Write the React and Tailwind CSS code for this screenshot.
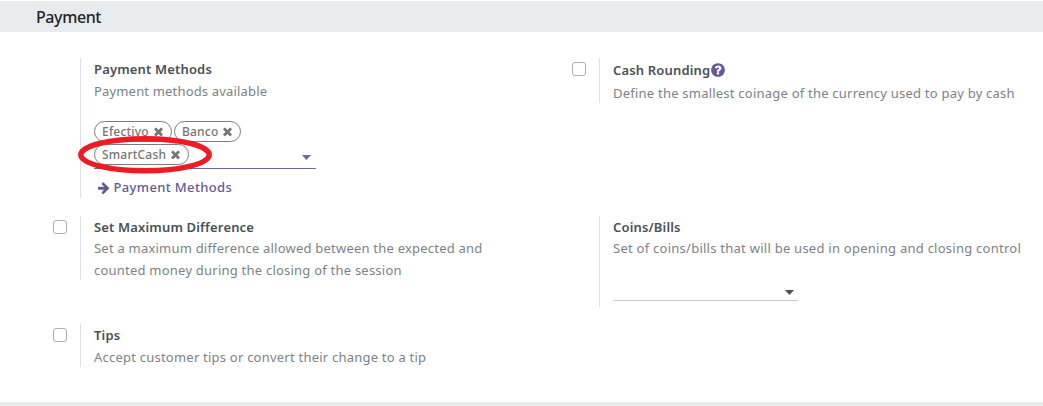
import React from "react";

const PATHS = {
  arrow:
    "M1600 960q0 54-37 91l-651 651q-39 37-91 37-51 0-90-37l-75-75q-38-38-38-91t38-91l293-293h-704q-52 0-84.5-37.5t-32.5-90.5v-128q0-53 32.5-90.5t84.5-37.5h704l-293-294q-38-36-38-90t38-90l75-75q38-38 90-38 53 0 91 38l651 651q37 35 37 90z",
  times:
    "M1490 1322q0 40-28 68l-136 136q-28 28-68 28t-68-28l-294-294-294 294q-28 28-68 28t-68-28l-136-136q-28-28-28-68t28-68l294-294-294-294q-28-28-28-68t28-68l136-136q28-28 68-28t68 28l294 294 294-294q28-28 68-28t68 28l136 136q28 28 28 68t-28 68l-294 294 294 294q28 28 28 68z",
  question:
    "M1024 1376v-192q0-14-9-23t-23-9h-192q-14 0-23 9t-9 23v192q0 14 9 23t23 9h192q14 0 23-9t9-23zm256-672q0-88-55.5-163t-138.5-116-170-41q-243 0-371 213-15 24 8 42l132 100q7 6 19 6 16 0 25-12 53-68 86-92 34-24 86-24 48 0 85.5 26t37.5 59q0 38-20 61t-68 45q-63 28-115.5 86.5t-52.5 125.5v36q0 14 9 23t23 9h192q14 0 23-9t9-23q0-19 21.5-49.5t54.5-49.5q32-18 49-28.5t46-35 44.5-48 28-60.5 12.5-81zm384 192q0 209-103 385.5t-279.5 279.5-385.5 103-385.5-103-279.5-279.5-103-385.5 103-385.5 279.5-279.5 385.5-103 385.5 103 279.5 279.5 103 385.5z",
};

function Icon({ name, className }) {
  return (
    <svg viewBox="0 0 1792 1792" fill="currentColor" className={className}>
      <path d={PATHS[name]} />
    </svg>
  );
}

function Setting({ checkbox, className, children }) {
  return (
    <div className={`flex pl-[53px] ${className}`}>
      <div className="w-[27px] shrink-0 pt-[4px]">
        {checkbox && (
          <div className="h-[14px] w-[14px] rounded-[3px] border border-[#adb0b3] bg-white" />
        )}
      </div>
      <div className="flex-1 border-l border-[#dee2e6] pl-[13px]">{children}</div>
    </div>
  );
}

function Title({ className = "h-[22px]", children }) {
  return (
    <div className={`flex items-center pt-[2px] font-semibold tracking-[0.16px] whitespace-nowrap text-[#495057] ${className}`}>
      {children}
    </div>
  );
}

function Help({ className = "tracking-[0.225px]", children }) {
  return (
    <div className={`h-[22px] leading-[22px] whitespace-nowrap text-[#7c8287] ${className}`}>
      {children}
    </div>
  );
}

function Tag({ className, children }) {
  return (
    <span className={`flex h-[21px] items-center justify-between rounded-full border border-[#7c7c7c] bg-white pr-[6px] pl-[7px] text-[12px] font-medium tracking-[0.2px] whitespace-nowrap text-[#757575] ${className}`}>
      {children}
      <Icon name="times" className="h-[13px] w-[13px]" />
    </span>
  );
}

function Caret({ className }) {
  return (
    <svg viewBox="0 0 9 5" fill="currentColor" className={`h-[5px] w-[9px] ${className}`}>
      <path d="M0 0h9L4.5 5z" />
    </svg>
  );
}

export default function App() {
  return (
    <div className="flex h-[406px] w-[1043px] flex-col overflow-hidden bg-white pt-px font-['Noto_Sans',sans-serif] text-[13px]">
      <header className="flex h-[31px] shrink-0 items-center bg-[#e8ebee] pl-[36px] text-[16px] font-medium tracking-[-0.4px] text-[#212529]">
        <h2>Payment</h2>
      </header>

      <main className="grid h-[370px] shrink-0 grid-cols-[519px_524px] grid-rows-[158px_108px_1fr] pt-[26px]">
        <Setting className="h-[140px]">
          <Title>Payment Methods</Title>
          <Help className="tracking-[0.17px]">Payment methods available</Help>
          <div className="relative mt-[18px] flex h-[49px] w-[222px] flex-col gap-[2px] border-b border-[#7065a0] pt-px">
            <div className="flex gap-[2px]">
              <Tag className="w-[78px]">Efectivo</Tag>
              <Tag className="w-[67px]">Banco</Tag>
            </div>
            <div className="flex items-center justify-between">
              <Tag className="w-[95px]">SmartCash</Tag>
              <Caret className="mt-[6px] mr-[5px] text-[#7065a0]" />
            </div>
            <svg viewBox="0 0 136 42" className="absolute top-[15px] left-[-17px] h-[42px] w-[136px]">
              <ellipse cx="68" cy="19.8" rx="64.2" ry="16" fill="none" stroke="#ed1c24" strokeWidth="5.4" />
            </svg>
          </div>
          <div className="mt-[8px] flex h-[22px] items-center gap-[3px] pl-[3px] font-medium tracking-[0.35px] text-[#655a93]">
            <Icon name="arrow" className="mb-px h-[13.5px] w-[13.5px]" />
            <span>Payment Methods</span>
          </div>
        </Setting>

        <Setting checkbox className="h-[45px]">
          <Title className="h-[24px]">
            <span>Cash Rounding</span>
            <Icon name="question" className="mb-[3px] h-[16px] w-[16px] text-[#655a93]" />
          </Title>
          <Help>Define the smallest coinage of the currency used to pay by cash</Help>
        </Setting>

        <Setting checkbox className="h-[64px]">
          <Title>Set Maximum Difference</Title>
          <Help className="-mt-px tracking-[0.215px]">Set a maximum difference allowed between the expected and</Help>
          <Help>counted money during the closing of the session</Help>
        </Setting>

        <Setting className="h-[91px]">
          <Title>Coins/Bills</Title>
          <Help className="-mt-px tracking-[0.255px]">
            Set of coins/bills that will be used in opening and closing control
          </Help>
          <div className="mt-[19px] flex h-[23px] w-[185px] items-center justify-end border-b border-[#c9cccf] pr-[4px]">
            <Caret className="mt-[6px] text-[#495057]" />
          </div>
        </Setting>

        <Setting checkbox className="h-[43px]">
          <Title>Tips</Title>
          <Help>Accept customer tips or convert their change to a tip</Help>
        </Setting>
      </main>

      <footer className="flex-1 bg-[#e8ebee]" />
    </div>
  );
}
